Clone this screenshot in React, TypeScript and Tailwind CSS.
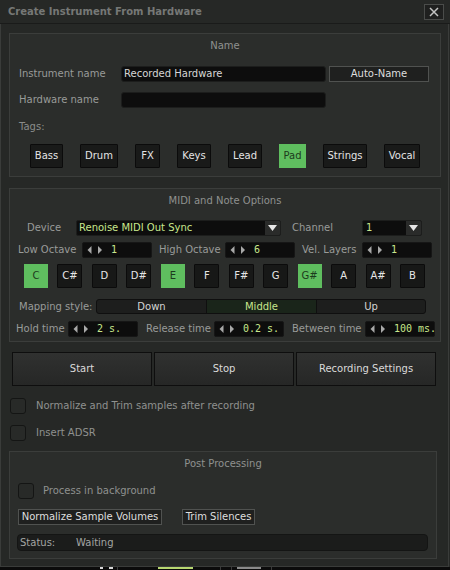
import React from "react";

const LIME = "text-[#c8e78c]";

function Arrows() {
  return (
    <svg width="15" height="8" viewBox="0 0 15 8" className="shrink-0 ml-[4px]">
      <path d="M4.5 0 L0.5 4 L4.5 8 Z" fill="#a9a9a9" />
      <path d="M11 0 L15 4 L11 8 Z" fill="#a9a9a9" />
    </svg>
  );
}

function Spinner({ value }: { value: string }) {
  return (
    <div className="w-[70px] h-[16px] shrink-0 bg-[#0d0d0d] rounded-[2px] border border-[#161616] flex items-center overflow-visible">
      <Arrows />
      <span className={`ml-[9px] whitespace-nowrap font-['DejaVu_Sans_Mono',monospace] text-[10px] leading-none ${LIME}`}>{value}</span>
    </div>
  );
}

function DropArrow() {
  return (
    <div className="w-[15px] h-full bg-[#2a2b2a] flex items-center justify-center shrink-0">
      <svg width="9" height="6" viewBox="0 0 9 6">
        <path d="M0 0 L9 0 L4.5 6 Z" fill="#e6e6e6" />
      </svg>
    </div>
  );
}

function Check() {
  return <div className="w-[16px] h-[16px] shrink-0 rounded-[3px] border border-[#141514] bg-[#282a28]" />;
}

const tags = [
  { t: "Bass", w: 33 },
  { t: "Drum", w: 38 },
  { t: "FX", w: 25 },
  { t: "Keys", w: 34 },
  { t: "Lead", w: 34 },
  { t: "Pad", w: 27, on: true },
  { t: "Strings", w: 44 },
  { t: "Vocal", w: 36 },
];

const notes = [
  { n: "C", on: true },
  { n: "C#" },
  { n: "D" },
  { n: "D#" },
  { n: "E", on: true },
  { n: "F" },
  { n: "F#" },
  { n: "G" },
  { n: "G#", on: true },
  { n: "A" },
  { n: "A#" },
  { n: "B" },
];

export default function App() {
  return (
    <div className="w-[450px] h-[570px] overflow-hidden bg-[#262826] flex flex-col font-['DejaVu_Sans',sans-serif] text-[10px] leading-none text-[#999b99]">
      {/* Title bar */}
      <div className="h-[24px] shrink-0 bg-[#262826] border-b border-[#1a1b1a] flex items-center pl-[8px] pr-[6px]">
        <span className="font-bold text-[#767876]">Create Instrument From Hardware</span>
        <div className="ml-auto w-[20px] h-[16px] border border-[#4a4c4a] bg-[#1f201f] flex items-center justify-center">
          <svg width="10" height="10" viewBox="0 0 10 10">
            <path d="M1 1 L9 9 M9 1 L1 9" stroke="#c4c4c4" strokeWidth="1.5" />
          </svg>
        </div>
      </div>

      {/* Body */}
      <div className="flex-1 flex flex-col border-l border-r border-b border-[#3a3c3a] w-[449px]">
        {/* Name panel */}
        <div className="mt-[9px] ml-[8px] w-[432px] h-[144px] shrink-0 border border-[#3b3d3b] bg-[#2b2d2b] flex flex-col">
          <div className="h-[24px] flex items-center justify-center text-[#8f918f]">Name</div>
          <div className="mt-[8px] h-[16px] flex items-center pl-[9px]">
            <span className="w-[102px] shrink-0">Instrument name</span>
            <div className="w-[205px] h-[16px] bg-[#0d0d0d] rounded-[3px] border border-[#1c1d1c] flex items-center pl-[2px] text-[#d6d6d6]">
              Recorded Hardware
            </div>
            <div className="ml-[3px] w-[100px] h-[16px] bg-[#1f201f] border border-[#505250] flex items-center justify-center text-[#dedede]">
              Auto-Name
            </div>
          </div>
          <div className="mt-[10px] h-[16px] flex items-center pl-[9px]">
            <span className="w-[102px] shrink-0">Hardware name</span>
            <div className="w-[205px] h-[16px] bg-[#0d0d0d] rounded-[3px] border border-[#1c1d1c]" />
          </div>
          <div className="mt-[12px] h-[14px] flex items-center pl-[9px] text-[#8a8c8a]">Tags:</div>
          <div className="mt-[10px] h-[24px] flex justify-center gap-[17px]">
            {tags.map((t) => (
              <div
                key={t.t}
                style={{ width: t.w }}
                className={
                  t.on
                    ? "h-[24px] bg-[#5fbe5f] flex items-center justify-center text-[#1d3a1d]"
                    : "h-[24px] bg-[#191a19] border border-[#0b0b0b] rounded-[1px] flex items-center justify-center text-[#e4e4e4]"
                }
              >
                {t.t}
              </div>
            ))}
          </div>
        </div>

        {/* MIDI panel */}
        <div className="mt-[11px] ml-[8px] w-[432px] h-[154px] shrink-0 border border-[#3b3d3b] bg-[#2b2d2b] flex flex-col">
          <div className="h-[23px] flex items-center justify-center text-[#8f918f]">MIDI and Note Options</div>
          <div className="mt-[8px] h-[16px] flex items-center pl-[17px]">
            <span className="w-[49px] shrink-0">Device</span>
            <div className="w-[205px] h-[16px] bg-[#0d0d0d] border border-[#1c1d1c] rounded-[2px] flex items-center overflow-hidden">
              <span className={`flex-1 pl-[2px] ${LIME}`}>Renoise MIDI Out Sync</span>
              <DropArrow />
            </div>
            <span className="ml-[11px] w-[70px] shrink-0">Channel</span>
            <div className="w-[60px] h-[16px] bg-[#0d0d0d] border border-[#1c1d1c] rounded-[2px] flex items-center overflow-hidden">
              <span className={`flex-1 pl-[3px] ${LIME}`}>1</span>
              <DropArrow />
            </div>
          </div>
          <div className="mt-[6px] h-[16px] flex items-center">
            <span className="ml-[8px] w-[64px] shrink-0">Low Octave</span>
            <Spinner value="1" />
            <span className="ml-[7px] w-[66px] shrink-0">High Octave</span>
            <Spinner value="6" />
            <span className="ml-[7px] w-[60px] shrink-0">Vel. Layers</span>
            <Spinner value="1" />
          </div>
          <div className="mt-[6px] h-[24px] ml-[14px] w-[401px] flex justify-between">
            {notes.map((n) => (
              <div
                key={n.n}
                className={
                  n.on
                    ? "w-[24px] h-[24px] bg-[#5fbe5f] flex items-center justify-center text-[#1d3a1d]"
                    : "w-[25px] h-[24px] bg-[#171817] border border-[#0b0b0b] rounded-[1px] flex items-center justify-center text-[#e6e6e6]"
                }
              >
                {n.n}
              </div>
            ))}
          </div>
          <div className="mt-[11px] h-[15px] flex items-center">
            <span className="ml-[9px] w-[77px] shrink-0">Mapping style:</span>
            <div className="w-[330px] h-[15px] flex border border-[#0f0f0f] rounded-[3px] overflow-hidden bg-[#1d1e1d]">
              <div className="w-[110px] flex items-center justify-center text-[#d4d4d4] border-r border-[#0f0f0f]">Down</div>
              <div className={`w-[110px] flex items-center justify-center bg-[#1a251a] border-r border-[#0f0f0f] ${LIME}`}>Middle</div>
              <div className="flex-1 flex items-center justify-center text-[#d4d4d4]">Up</div>
            </div>
          </div>
          <div className="mt-[7px] h-[16px] flex items-center">
            <span className="ml-[6px] w-[52px] shrink-0">Hold time</span>
            <Spinner value="2 s." />
            <span className="ml-[8px] w-[68px] shrink-0">Release time</span>
            <Spinner value="0.2 s." />
            <span className="ml-[8px] w-[73px] shrink-0">Between time</span>
            <Spinner value="100 ms." />
          </div>
        </div>

        {/* Big buttons */}
        <div className="mt-[10px] ml-[11px] h-[34px] shrink-0 flex gap-[2px]">
          {["Start", "Stop", "Recording Settings"].map((b) => (
            <div
              key={b}
              className="w-[140px] h-[34px] bg-gradient-to-b from-[#303130] to-[#262726] border border-[#0e0e0e] flex items-center justify-center text-[#dadada]"
            >
              {b}
            </div>
          ))}
        </div>

        {/* Checkboxes */}
        <div className="mt-[12px] ml-[9px] h-[15px] shrink-0 flex items-center">
          <Check />
          <span className="ml-[10px] text-[#8f918f]">Normalize and Trim samples after recording</span>
        </div>
        <div className="mt-[12px] ml-[9px] h-[15px] shrink-0 flex items-center">
          <Check />
          <span className="ml-[10px] text-[#8f918f]">Insert ADSR</span>
        </div>

        {/* Post panel */}
        <div className="mt-[11px] ml-[8px] w-[428px] h-[108px] shrink-0 border border-[#3b3d3b] bg-[#2b2d2b] flex flex-col">
          <div className="h-[23px] flex items-center justify-center text-[#8f918f]">Post Processing</div>
          <div className="mt-[8px] h-[16px] flex items-center ml-[8px]">
            <Check />
            <span className="ml-[9px] text-[#8f918f]">Process in background</span>
          </div>
          <div className="mt-[10px] h-[16px] flex items-center ml-[8px]">
            <div className="w-[144px] h-[16px] bg-[#1f201f] border border-[#505250] flex items-center justify-center text-[#dedede]">
              Normalize Sample Volumes
            </div>
            <div className="ml-[20px] w-[73px] h-[16px] bg-[#1f201f] border border-[#505250] flex items-center justify-center text-[#dedede]">
              Trim Silences
            </div>
          </div>
          <div className="mt-[9px] ml-[7px] w-[411px] h-[17px] bg-[#1b1c1b] border border-[#141514] rounded-[4px] flex items-center pl-[2px] text-[#a3a5a3]">
            <span className="w-[56px] shrink-0">Status:</span>
            <span>Waiting</span>
          </div>
        </div>
      </div>

      {/* Underlying content peeking out */}
      <div className="h-[3px] shrink-0 bg-[#0b0b0b] flex items-start">
        <div className="ml-[100px] w-[3px] h-[2px] bg-[#d8d8d8]" />
        <div className="ml-[6px] w-[4px] h-[2px] bg-[#d8d8d8]" />
        <div className="ml-[4px] w-[1px] h-[3px] bg-[#3a3a3a]" />
        <div className="ml-[40px] w-[35px] h-[2px] bg-[#b8d870]" />
        <div className="ml-[27px] w-[1px] h-[3px] bg-[#3a3a3a]" />
        <div className="ml-[10px] w-[1px] h-[3px] bg-[#3a3a3a]" />
        <div className="ml-[5px] w-[24px] h-[2px] bg-[#8a8a8a]" />
        <div className="ml-[10px] w-[1px] h-[3px] bg-[#3a3a3a]" />
      </div>
    </div>
  );
}
